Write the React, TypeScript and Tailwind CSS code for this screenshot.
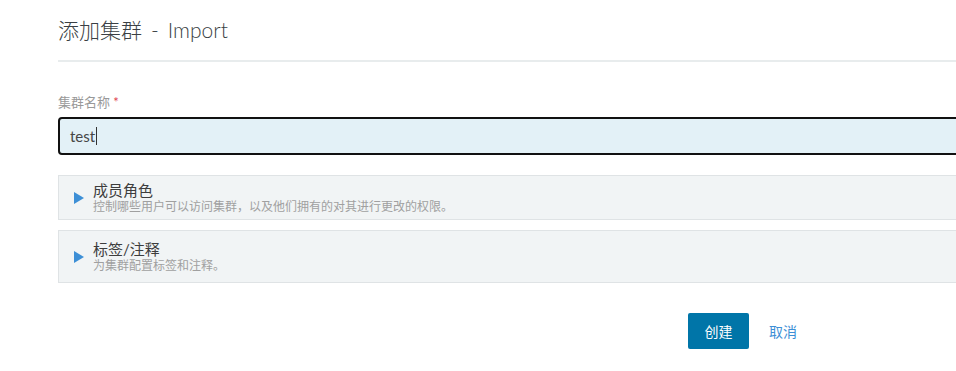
import React from "react";

const font = { fontFamily: '"Lato", "Noto Sans CJK SC", sans-serif' };

function Accordion({ title, sub, h }: { title: string; sub: string; h: string }) {
  return (
    <div className={`flex items-center border border-[#dfe3e5] bg-[#f1f4f5] ${h}`}>
      <div className="ml-[15px] mr-[9px] h-0 w-0 border-y-[6px] border-l-[10px] border-y-transparent border-l-[#3d8fd6]" />
      <div className="flex flex-col">
        <div className="text-[15px] leading-[18px] text-[#3d3d3d]">{title}</div>
        <div className="text-[12px] leading-[15px] text-[#a0a0a0]">{sub}</div>
      </div>
    </div>
  );
}

export default function App() {
  return (
    <div className="h-[371px] w-[956px] overflow-hidden bg-white" style={font}>
      <div className="w-[1430px] pl-[58px]">
        <div className="flex h-[60px] items-center pb-[1px]">
          <h1 className="flex items-center text-[21px] font-light text-[#3a3f44]">
            <span>添加集群</span>
            <span className="mx-[9px]">-</span>
            <span>Import</span>
          </h1>
        </div>
        <div className="h-[2px] bg-[#e8eced]" />
        <div className="mt-[32px] text-[13px] leading-[16px] text-[#999]">
          集群名称 <span className="text-[#e0454f]">*</span>
        </div>
        <div className="mt-[7px] flex h-[38px] items-center rounded-[4px] border-2 border-[#111] bg-[#e3f1f7] pl-[10px]">
          <span className="text-[15px] text-[#464646]">test</span>
          <span className="ml-[1px] h-[18px] w-[1px] bg-[#333]" />
        </div>
        <div className="mt-[20px]">
          <Accordion
            h="h-[45px]"
            title="成员角色"
            sub="控制哪些用户可以访问集群，以及他们拥有的对其进行更改的权限。"
          />
        </div>
        <div className="mt-[10px]">
          <Accordion h="h-[53px]" title="标签/注释" sub="为集群配置标签和注释。" />
        </div>
        <div className="mt-[30px] flex items-center pl-[630px]">
          <button className="h-[36px] w-[61px] rounded-[2px] bg-[#0075a8] text-[14px] text-white">
            创建
          </button>
          <button className="ml-[20px] text-[14px] text-[#3d8fd6]">取消</button>
        </div>
      </div>
    </div>
  );
}
